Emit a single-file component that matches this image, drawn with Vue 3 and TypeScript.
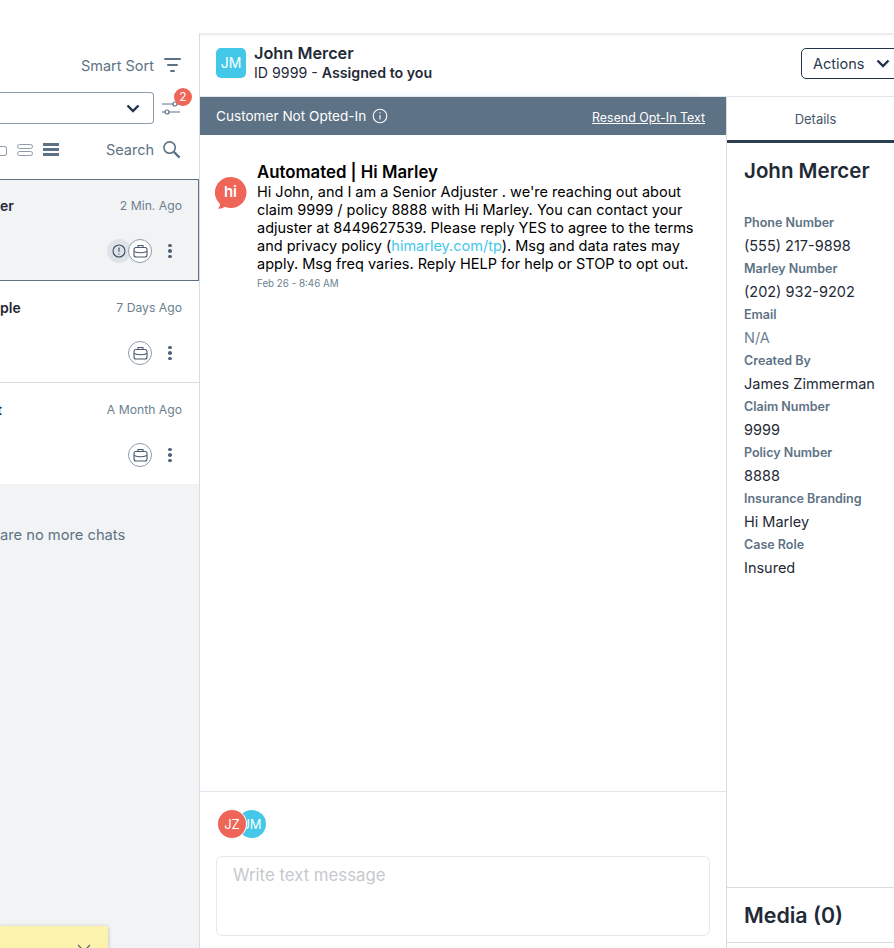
<template>
  <div class="page">
    <div class="topbar"></div>
    <div class="main">
      <aside class="inbox">
        <div class="sort-row">
          <span>Smart Sort</span>
          <svg width="17" height="16" viewBox="0 0 17 16" fill="none" stroke="#5d7285" stroke-width="2" stroke-linecap="round"><path d="M1 2h15M4 8h9M7 14h3" /></svg>
        </div>
        <div class="filter-row">
          <div class="select">
            <svg width="14" height="9" viewBox="0 0 14 9" fill="none" stroke="#22324a" stroke-width="2.4"><path d="M1.500 1.500 7 7l5.500-5.500" /></svg>
          </div>
          <div class="sliders">
            <svg width="20" height="16" viewBox="0 0 20 16" fill="none" stroke="#5d7285" stroke-width="1.2"><path d="M1 4h11M16 4h3M1 12h3M8 12h11" /><circle cx="14" cy="4" r="2" /><circle cx="6" cy="12" r="2" /></svg>
            <span class="badge">2</span>
          </div>
        </div>
        <div class="view-row">
          <div class="views">
            <span class="view-single"></span>
            <span class="view-double"><i></i><i></i></span>
            <span class="view-triple"><i></i><i></i><i></i></span>
          </div>
          <span class="search-label">Search</span>
          <svg width="19" height="19" viewBox="0 0 20 20" fill="none" stroke="#5d7285"><circle cx="8" cy="8" r="6" stroke-width="1.7" /><path d="m12.500 12.500 6 6" stroke-width="2.4" /></svg>
        </div>
        <div v-for="chat in chats" :key="chat.time" class="chat" :class="{ active: chat.active }">
          <div class="chat-top">
            <span class="chat-name" :style="{ marginLeft: chat.offset + 'px' }">{{ chat.name }}</span>
            <span class="chat-time">{{ chat.time }}</span>
          </div>
          <div class="chat-icons">
            <span v-if="chat.alert" class="alert-icon">
              <svg width="14" height="14" viewBox="0 0 14 14" fill="none" stroke="#3b4a5a" stroke-width="1.1"><circle cx="7" cy="7" r="6" /><path d="M7 3.500v4.200M7 9.500v1" /></svg>
            </span>
            <span class="case-icon" :class="{ overlap: chat.alert }">
              <svg width="15" height="14" viewBox="0 0 15 14" fill="none" stroke="#4a5a6a" stroke-width="1.1"><rect x="1" y="3.500" width="13" height="9.500" rx="2" /><path d="M5 3.500V1.500h5v2M1 7.500c4 1.600 9 1.600 13 0" /></svg>
            </span>
            <span class="dots"><i></i><i></i><i></i></span>
          </div>
        </div>
        <div class="no-more">are no more chats</div>
        <div class="toast">
          <span class="toast-text">age</span>
          <svg width="14" height="14" viewBox="0 0 14 14" fill="none" stroke="#5d6670" stroke-width="1.2"><path d="m1 1 12 12M13 1 1 13" /></svg>
        </div>
      </aside>

      <section class="conversation">
        <header class="conv-header">
          <div class="avatar-square">JM</div>
          <div class="conv-title">
            <div class="conv-name">John Mercer</div>
            <div class="conv-sub">ID 9999 - <b>Assigned to you</b></div>
          </div>
          <button class="actions">
            Actions
            <svg width="14" height="9" viewBox="0 0 14 9" fill="none" stroke="#22324a" stroke-width="2.4"><path d="M1.500 1.500 7 7l5.500-5.500" /></svg>
          </button>
        </header>
        <div class="conv-body">
          <div class="thread">
            <div class="banner">
              <span class="banner-left">
                Customer Not Opted-In
                <svg width="16" height="16" viewBox="0 0 16 16" fill="none" stroke="#fff" stroke-width="1.1"><circle cx="8" cy="8" r="6.800" /><path d="M8 7v4.600M8 4.200v1.400" /></svg>
              </span>
              <a class="resend">Resend Opt-In Text</a>
            </div>
            <div class="messages">
              <div class="message">
                <svg class="hi-logo" width="32" height="34" viewBox="0 0 32 34">
                  <path fill="#ef6558" d="M16 1a15.500 15.500 0 1 1-6 29.800c-2 1.400-4.500 2-7 1.900 1.300-1.300 2-3 2-4.700A15.500 15.500 0 0 1 16 1z" />
                  <text x="15.500" y="21" text-anchor="middle" class="hi-text">hi</text>
                </svg>
                <div class="message-body">
                  <div class="message-from">Automated | Hi Marley</div>
                  <p class="message-text">Hi John, and I am a Senior Adjuster . we're reaching out about<br>claim 9999 / policy 8888 with Hi Marley. You can contact your<br>adjuster at 8449627539. Please reply YES to agree to the terms<br>and privacy policy (<a>himarley.com/tp</a>). Msg and data rates may<br>apply. Msg freq varies. Reply HELP for help or STOP to opt out.</p>
                  <div class="message-date">Feb 26 - 8:46 AM</div>
                </div>
              </div>
            </div>
            <div class="composer">
              <div class="participants">
                <span class="round jm">JM</span>
                <span class="round jz">JZ</span>
              </div>
              <div class="input">Write text message</div>
            </div>
          </div>

          <aside class="details">
            <div class="tab">Details</div>
            <div class="details-main">
              <h2>John Mercer</h2>
              <div class="fields">
                <div v-for="f in fields" :key="f.label" class="field">
                  <div class="field-label">{{ f.label }}</div>
                  <div class="field-value" :class="{ muted: f.value === 'N/A' }">{{ f.value }}</div>
                </div>
              </div>
            </div>
            <div class="media">Media (0)</div>
            <div class="media-end"></div>
          </aside>
        </div>
      </section>
    </div>
  </div>
</template>

<script setup lang="ts">
const chats = [
  { name: 'er', time: '2 Min. Ago', alert: true, active: true, offset: 0 },
  { name: 'ple', time: '7 Days Ago', alert: false, active: false, offset: 0 },
  { name: 't', time: 'A Month Ago', alert: false, active: false, offset: -3 },
]

const fields = [
  { label: 'Phone Number', value: '(555) 217-9898' },
  { label: 'Marley Number', value: '(202) 932-9202' },
  { label: 'Email', value: 'N/A' },
  { label: 'Created By', value: 'James Zimmerman' },
  { label: 'Claim Number', value: '9999' },
  { label: 'Policy Number', value: '8888' },
  { label: 'Insurance Branding', value: 'Hi Marley' },
  { label: 'Case Role', value: 'Insured' },
]
</script>

<style>
html,
body {
  margin: 0;
  overflow: hidden;
}
</style>

<style scoped>
.page {
  width: 894px;
  height: 948px;
  overflow: hidden;
  background: #fff;
  font-family: Inter, "Open Sans", sans-serif;
  color: #1f2a37;
  display: flex;
  flex-direction: column;
}
.topbar {
  height: 33px;
  flex: none;
  background: #fff;
  box-shadow: 0 2px 2px rgba(0, 0, 0, 0.09);
  position: relative;
}
.main {
  flex: 1;
  display: flex;
  min-height: 0;
}
.inbox {
  width: 200px;
  flex: none;
  box-sizing: border-box;
  border-right: 1px solid #d9dde1;
  display: flex;
  flex-direction: column;
  background: #f1f3f5;
  position: relative;
  overflow: hidden;
}
.sort-row,
.filter-row,
.view-row {
  background: #fff;
  display: flex;
  align-items: center;
}
.sort-row {
  height: 59px;
  box-sizing: border-box;
  padding: 5px 18px 0 0;
  justify-content: flex-end;
  gap: 10px;
  font-size: 14.500px;
  color: #5d7285;
}
.filter-row {
  height: 32px;
  padding-right: 18px;
}
.select {
  width: 155px;
  height: 32px;
  box-sizing: border-box;
  border: 1px solid #8d9dab;
  border-left: 0;
  border-radius: 0 4px 4px 0;
  display: flex;
  align-items: center;
  justify-content: flex-end;
  padding-right: 13px;
}
.sliders {
  margin-left: 7px;
  position: relative;
  display: flex;
}
.badge {
  position: absolute;
  left: 13px;
  top: -12px;
  width: 18px;
  height: 18px;
  border-radius: 50%;
  background: #ef6558;
  color: #fff;
  font-size: 12px;
  line-height: 18px;
  text-align: center;
}
.view-row {
  height: 55px;
  padding-right: 18px;
  padding-bottom: 4px;
  box-sizing: border-box;
}
.views {
  display: flex;
  align-items: center;
  gap: 10px;
  flex: 1;
}
.view-single {
  width: 7px;
  height: 10px;
  box-sizing: border-box;
  border: 1px solid #8d9dab;
  border-left: 0;
  border-radius: 0 3px 3px 0;
  margin-top: 2px;
}
.view-double,
.view-triple {
  width: 16px;
  display: flex;
  flex-direction: column;
  gap: 2px;
}
.view-double i {
  height: 5px;
  box-sizing: border-box;
  border: 1px solid #8d9dab;
  border-radius: 3px;
}
.view-triple i {
  height: 3px;
  background: #5d7285;
}
.search-label {
  font-size: 14.500px;
  color: #5d7285;
  margin-right: 8px;
}
.chat {
  height: 102px;
  box-sizing: border-box;
  background: #fff;
  border-bottom: 1px solid #d9dde1;
  padding: 18px 17px 0 0;
}
.chat:nth-child(6) {
  height: 101px;
  border-bottom-color: #fff;
}
.chat.active {
  background: #f1f3f5;
  border: 1px solid #5d7285;
  border-left: 0;
  padding: 17px 16px 0 0;
}
.chat-top {
  display: flex;
  justify-content: space-between;
  align-items: center;
}
.chat-name {
  font-size: 14px;
  font-weight: 600;
}
.chat-time {
  font-size: 12.200px;
  color: #6b7f90;
}
.chat-icons {
  margin-top: 25px;
  display: flex;
  justify-content: flex-end;
  align-items: center;
}
.alert-icon,
.case-icon {
  width: 24px;
  height: 24px;
  border-radius: 50%;
  display: flex;
  align-items: center;
  justify-content: center;
  box-sizing: border-box;
}
.alert-icon {
  background: #dde3e8;
}
.case-icon {
  background: #fff;
  border: 1px solid #8d9dab;
}
.case-icon.overlap {
  margin-left: -3px;
}
.dots {
  width: 4px;
  display: flex;
  flex-direction: column;
  gap: 2px;
  margin: 0 10px 0 16px;
}
.dots i {
  height: 3.500px;
  border-radius: 50%;
  background: #4d6276;
}
.no-more {
  margin-top: 42px;
  font-size: 14.700px;
  color: #5d7285;
}
.toast {
  position: absolute;
  left: 0;
  top: 893px;
  width: 108px;
  height: 40px;
  box-sizing: border-box;
  background: #fdf1ae;
  box-shadow: 0 1px 4px rgba(0, 0, 0, 0.25);
  display: flex;
  justify-content: space-between;
  align-items: flex-start;
  padding: 18px 17px 0 0;
  font-size: 15px;
  font-weight: 600;
  color: #1f2a37;
}
.toast-text {
  margin-top: -1px;
}
.conversation {
  flex: 1;
  min-width: 0;
  display: flex;
  flex-direction: column;
}
.conv-header {
  height: 64px;
  flex: none;
  box-sizing: border-box;
  display: flex;
  align-items: center;
  padding: 0 0 3px 16px;
  border-bottom: 1px solid #e3e6e9;
  position: relative;
}
.conv-header::after {
  content: "";
  position: absolute;
  left: 40px;
  bottom: 0;
  width: 460px;
  height: 6px;
  background: linear-gradient(rgba(243, 248, 251, 0), #f3f8fb);
}
.avatar-square {
  width: 30px;
  height: 30px;
  border-radius: 5px;
  background: #44c8ea;
  color: #fff;
  font-size: 14px;
  line-height: 30px;
  text-align: center;
}
.conv-title {
  margin-left: 8px;
  flex: 1;
}
.conv-name {
  font-size: 16.300px;
  font-weight: 600;
  line-height: 19px;
}
.conv-sub {
  font-size: 14.200px;
  line-height: 19px;
}
.conv-sub b {
  font-weight: 600;
}
.actions {
  width: 110px;
  height: 31px;
  margin-right: -17px;
  box-sizing: border-box;
  background: #fff;
  border: 1px solid #22324a;
  border-radius: 5px;
  font-family: inherit;
  font-size: 14.500px;
  color: #2a3a4d;
  display: flex;
  align-items: center;
  gap: 12px;
  padding: 0 0 0 11px;
}
.conv-body {
  flex: 1;
  display: flex;
  min-height: 0;
}
.thread {
  width: 526px;
  flex: none;
  display: flex;
  flex-direction: column;
}
.banner {
  height: 38px;
  flex: none;
  background: #5d7285;
  color: #fff;
  display: flex;
  align-items: center;
  justify-content: space-between;
  padding: 0 21px 0 16px;
  font-size: 13.600px;
}
.banner-left {
  display: flex;
  align-items: center;
  gap: 6px;
}
.resend {
  text-decoration: underline;
  font-size: 12.400px;
  padding-top: 2px;
}
.messages {
  flex: 1;
  padding: 26px 16px 0 15px;
}
.message {
  display: flex;
}
.hi-logo {
  margin-top: 15px;
  flex: none;
}
.hi-text {
  fill: #fff;
  font-size: 15px;
  font-weight: 600;
}
.message-body {
  margin-left: 10px;
}
.message-from {
  font-size: 16.800px;
  font-weight: 600;
  line-height: 22px;
  color: #000;
}
.message-text {
  margin: 0;
  font-size: 14.500px;
  line-height: 18px;
  color: #000;
  white-space: nowrap;
}
.message-text a {
  color: #44c8ea;
}
.message-date {
  margin-top: 5px;
  font-size: 9.800px;
  color: #6b7f90;
}
.composer {
  height: 157px;
  flex: none;
  box-sizing: border-box;
  border-top: 1px solid #e3e6e9;
  padding: 18px 16px 0;
}
.participants {
  display: flex;
  flex-direction: row-reverse;
  justify-content: flex-end;
  height: 28px;
  padding-left: 2px;
  width: 50px;
}
.round {
  width: 28px;
  height: 28px;
  border-radius: 50%;
  color: #fff;
  font-size: 13px;
  line-height: 28px;
  text-align: center;
  flex: none;
}
.round.jm {
  background: #44c8ea;
  margin-left: -8px;
}
.round.jz {
  background: #ef6558;
  box-shadow: 0 0 0 1px #fff;
  position: relative;
}
.input {
  margin-top: 18px;
  height: 80px;
  box-sizing: border-box;
  border: 1px solid #e6e8ea;
  border-radius: 6px;
  padding: 8px 16px;
  font-size: 16.800px;
  color: #c5c9cd;
  width: 494px;
}
.details {
  width: 178px;
  flex: none;
  box-sizing: border-box;
  border-left: 1px solid #d9dde1;
  display: flex;
  flex-direction: column;
}
.tab {
  height: 46px;
  flex: none;
  box-sizing: border-box;
  border-bottom: 3px solid #2c3e50;
  font-size: 13px;
  color: #47586a;
  text-align: center;
  line-height: 44px;
}
.details-main {
  flex: 1;
  padding: 15px 0 0 17px;
}
h2 {
  margin: 0;
  font-size: 20.500px;
  font-weight: 600;
  line-height: 26px;
}
.fields {
  margin-top: 29px;
}
.field {
  height: 46px;
}
.field-label {
  font-size: 12.500px;
  font-weight: 600;
  color: #5d7285;
  line-height: 20px;
}
.field-value {
  font-size: 14.500px;
  line-height: 26px;
  white-space: nowrap;
}
.field-value.muted {
  color: #6b7f90;
}
.media {
  height: 56px;
  flex: none;
  box-sizing: border-box;
  border-top: 1px solid #d9dde1;
  border-bottom: 1px solid #d9dde1;
  padding-left: 17px;
  font-size: 21.400px;
  font-weight: 600;
  line-height: 55px;
}
.media-end {
  height: 5px;
  flex: none;
}
</style>
